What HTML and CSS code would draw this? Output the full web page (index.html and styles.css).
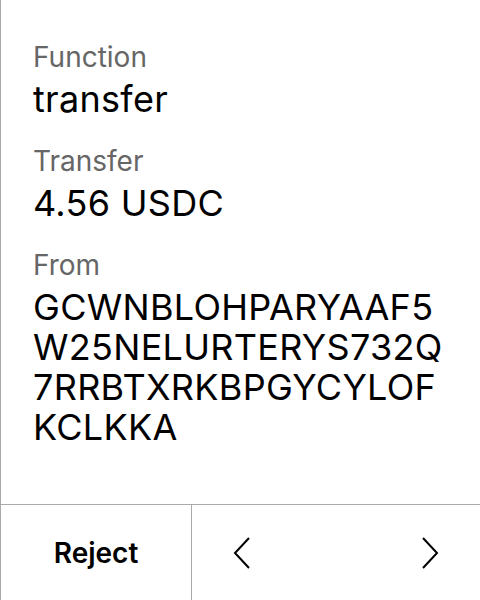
FILE: index.html
```html
<!DOCTYPE html>
<html lang="en">
<head>
<meta charset="utf-8">
<title>Transaction</title>
<link rel="stylesheet" href="styles.css">
</head>
<body>
<div class="screen">
  <div class="content">
    <div class="field">
      <div class="label">Function</div>
      <div class="value">transfer</div>
    </div>
    <div class="field">
      <div class="label">Transfer</div>
      <div class="value">4.56 USDC</div>
    </div>
    <div class="field">
      <div class="label">From</div>
      <div class="value address">GCWNBLOHPARYAAF5W25NELURTERYS732Q7RRBTXRKBPGYCYLOFKCLKKA</div>
    </div>
  </div>
  <div class="footer">
    <button class="reject">Reject</button>
    <div class="nav">
      <button class="nav-btn" aria-label="Previous">
        <svg width="18" height="32" viewBox="0 0 18 32"><path d="M16 1 L2 16 L16 31" fill="none" stroke="#000" stroke-width="2"/></svg>
      </button>
      <button class="nav-btn" aria-label="Next">
        <svg width="18" height="32" viewBox="0 0 18 32"><path d="M2 1 L16 16 L2 31" fill="none" stroke="#000" stroke-width="2"/></svg>
      </button>
    </div>
  </div>
</div>
</body>
</html>
```

FILE: styles.css
```css
* { box-sizing: border-box; }
html, body {
  margin: 0;
  padding: 0;
  background: #fff;
}
body {
  font-family: Inter, "Noto Sans", sans-serif;
  color: #000;
}
.screen {
  width: 480px;
  height: 600px;
  border-left: 1px solid #aaa;
  display: flex;
  flex-direction: column;
}
.content {
  flex: 1;
  padding: 40px 32px 0 32px;
  display: flex;
  flex-direction: column;
  gap: 25px;
}
.field {
  display: flex;
  flex-direction: column;
  gap: 5px;
}
.label {
  font-size: 28px;
  line-height: 34px;
  color: #666;
}
.value {
  font-size: 36px;
  line-height: 40px;
  letter-spacing: 0.3px;
  color: #000;
}
.address {
  word-break: break-all;
}
.footer {
  height: 96px;
  border-top: 1px solid #aaa;
  display: flex;
}
.reject {
  width: 191px;
  border: none;
  border-right: 1px solid #aaa;
  background: #fff;
  font-family: Inter, "Noto Sans", sans-serif;
  font-size: 28px;
  font-weight: 600;
  color: #000;
  padding: 0;
}
.nav {
  flex: 1;
  display: flex;
  justify-content: space-between;
  align-items: center;
  padding: 0 41px;
}
.nav-btn {
  border: none;
  background: none;
  padding: 0;
  display: flex;
}
```
